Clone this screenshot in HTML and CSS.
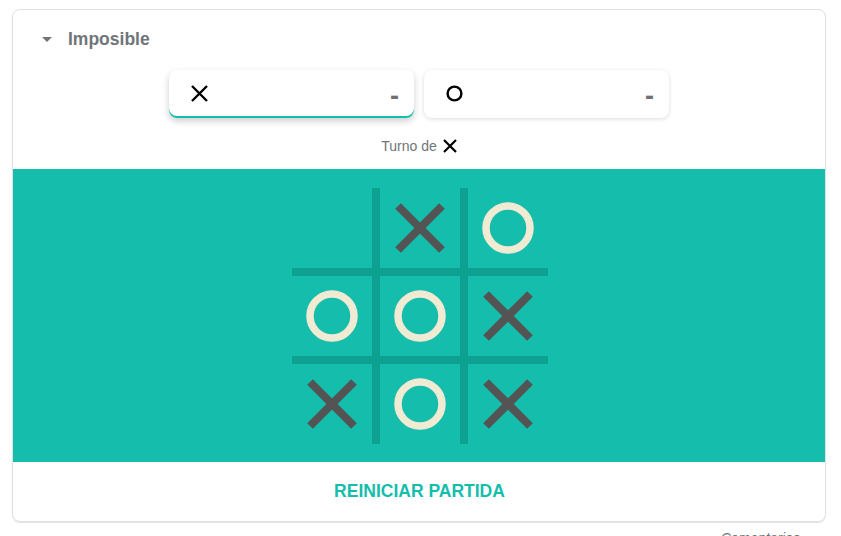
FILE: index.html
```html
<!DOCTYPE html>
<html lang="es">
<head>
<meta charset="utf-8">
<title>Tres en raya</title>
<link rel="stylesheet" href="styles.css">
</head>
<body>
<div class="card">
  <div class="header">
    <span class="caret"></span>
    <span class="level">Imposible</span>
  </div>
  <div class="players">
    <div class="player active">
      <svg class="pmark" width="17" height="17" viewBox="0 0 17 17"><path d="M1 1L16 16M16 1L1 16" stroke="#000" stroke-width="2.4" fill="none"/></svg>
      <span class="score">-</span>
    </div>
    <div class="player">
      <svg class="pmark" width="17" height="17" viewBox="0 0 17 17"><circle cx="8.5" cy="8.5" r="6.9" stroke="#000" stroke-width="2.4" fill="none"/></svg>
      <span class="score">-</span>
    </div>
  </div>
  <div class="turn">Turno de <svg class="tmark" width="14" height="14" viewBox="0 0 14 14"><path d="M1 1L13 13M13 1L1 13" stroke="#000" stroke-width="2.2" fill="none"/></svg></div>
  <div class="stage">
    <div class="board">
      <div class="cell"></div>
      <div class="cell"><svg viewBox="0 0 80 80"><path class="x" d="M18 18L62 62M62 18L18 62"/></svg></div>
      <div class="cell"><svg viewBox="0 0 80 80"><circle class="o" cx="40" cy="40" r="22"/></svg></div>
      <div class="cell"><svg viewBox="0 0 80 80"><circle class="o" cx="40" cy="40" r="22"/></svg></div>
      <div class="cell"><svg viewBox="0 0 80 80"><circle class="o" cx="40" cy="40" r="22"/></svg></div>
      <div class="cell"><svg viewBox="0 0 80 80"><path class="x" d="M18 18L62 62M62 18L18 62"/></svg></div>
      <div class="cell"><svg viewBox="0 0 80 80"><path class="x" d="M18 18L62 62M62 18L18 62"/></svg></div>
      <div class="cell"><svg viewBox="0 0 80 80"><circle class="o" cx="40" cy="40" r="22"/></svg></div>
      <div class="cell"><svg viewBox="0 0 80 80"><path class="x" d="M18 18L62 62M62 18L18 62"/></svg></div>
    </div>
  </div>
  <div class="actions">
    <span class="restart">REINICIAR PARTIDA</span>
  </div>
</div>
<div class="feedback">Comentarios</div>
</body>
</html>
```
FILE: styles.css
```css
html, body {
  margin: 0;
  padding: 0;
  background: #fff;
  font-family: "Liberation Sans", Arial, sans-serif;
}
body {
  padding: 9px 15px 0 12px;
}
.card {
  border: 1px solid #dfe1e5;
  border-radius: 8px;
  box-shadow: 0 1px 1px rgba(0,0,0,0.12);
  overflow: hidden;
}
.header {
  height: 59px;
  display: flex;
  align-items: center;
  padding-left: 29px;
}
.caret {
  width: 0;
  height: 0;
  border-left: 5px solid transparent;
  border-right: 5px solid transparent;
  border-top: 5px solid #70757a;
  margin-right: 16px;
}
.level {
  font-size: 17.5px;
  font-weight: bold;
  color: #70757a;
}
.players {
  display: flex;
  justify-content: center;
  gap: 10px;
  padding-top: 1px;
}
.player {
  width: 245px;
  height: 48px;
  box-sizing: border-box;
  border-radius: 8px;
  display: flex;
  align-items: center;
  justify-content: space-between;
  padding: 0 15px 0 22px;
  box-shadow: 0 1px 4px rgba(0,0,0,0.14);
}
.player.active {
  box-shadow: inset 0 -2px 0 #14bdac, 0 3px 7px rgba(0,0,0,0.2);
}
.pmark {
  display: block;
  margin-top: -1px;
}
.score {
  font-size: 27px;
  line-height: 20px;
  font-weight: bold;
  color: #707070;
  margin-top: 3px;
}
.turn {
  margin-top: 18px;
  height: 20px;
  line-height: 20px;
  display: flex;
  justify-content: center;
  align-items: center;
  gap: 6px;
  font-size: 14px;
  color: #70757a;
  margin-bottom: 13px;
}
.tmark {
  display: block;
}
.stage {
  background: #14bdac;
  height: 293px;
  display: flex;
  align-items: center;
  justify-content: center;
}
.board {
  display: grid;
  grid-template-columns: 80px 80px 80px;
  grid-template-rows: 80px 80px 80px;
  gap: 8px;
  background: #0da192;
  margin-left: 1px;
}
.cell {
  background: #14bdac;
}
.cell svg {
  display: block;
  width: 80px;
  height: 80px;
}
.x {
  stroke: #545454;
  stroke-width: 8;
  fill: none;
}
.o {
  stroke: #f2ebd3;
  stroke-width: 7.5;
  fill: none;
}
.actions {
  height: 59px;
  display: flex;
  align-items: center;
  justify-content: center;
}
.restart {
  font-size: 17.5px;
  font-weight: bold;
  color: #14bdac;
  margin-left: 1px;
}
.feedback {
  text-align: right;
  padding-right: 26px;
  margin-top: 8px;
  font-size: 14px;
  font-style: italic;
  color: #70757a;
}
```
